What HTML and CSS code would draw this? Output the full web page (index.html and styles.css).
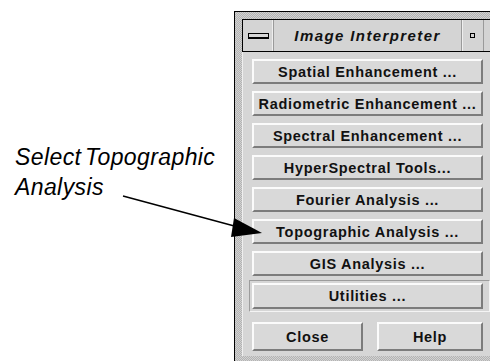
FILE: index.html
```html
<!DOCTYPE html>
<html>

<head>
    <link rel="stylesheet" href="styles.css">
</head>

<body>
    <div class="stage">
        <div class="callout">Select Topographic<br>Analysis</div>
        <svg class="arrow" width="490" height="361" viewBox="0 0 490 361">
            <line x1="123" y1="196" x2="238" y2="227" stroke="#000" stroke-width="1.5" />
            <polygon points="234,218 231,237 262,233" fill="#000" />
        </svg>

        <div class="window">
            <div class="titlebar">
                <div class="menu-btn"><span class="bar"></span></div>
                <div class="title">Image Interpreter</div>
                <div class="min-btn"><span class="dot"></span></div>
                <div class="max-btn"></div>
            </div>
            <div class="panel">
                <button class="btn">Spatial Enhancement ...</button>
                <button class="btn">Radiometric Enhancement ...</button>
                <button class="btn">Spectral Enhancement ...</button>
                <button class="btn">HyperSpectral Tools...</button>
                <button class="btn">Fourier Analysis ...</button>
                <button class="btn">Topographic Analysis ...</button>
                <button class="btn">GIS Analysis ...</button>
                <div class="default-frame">
                    <button class="btn">Utilities ...</button>
                </div>
                <div class="bottom-row">
                    <button class="btn big">Close</button>
                    <button class="btn big">Help</button>
                </div>
            </div>
        </div>
    </div>
</body>

</html>
```

FILE: styles.css
```css
body {
    margin: 0;
    background: #fff;
    width: 490px;
    height: 361px;
    overflow: hidden;
}

.stage {
    position: relative;
    height: 350px;
    padding: 11px 0 0 234px;
}

.callout {
    position: absolute;
    left: 15px;
    top: 142px;
    font-family: "Liberation Sans", Arial, sans-serif;
    font-style: italic;
    font-size: 23px;
    line-height: 30px;
    letter-spacing: 0.4px;
    word-spacing: -3px;
    color: #000;
}

.arrow {
    position: absolute;
    left: 0;
    top: 0;
    z-index: 2;
}

.window {
    box-sizing: border-box;
    width: 270px;
    height: 350px;
    border: 1px solid #000;
    border-right: none;
    border-bottom: none;
    padding: 7px 0 0 7px;
    background-color: #b3b3b3;
    background-image:
        linear-gradient(45deg, #d2d2d2 25%, transparent 25%, transparent 75%, #d2d2d2 75%),
        linear-gradient(45deg, #d2d2d2 25%, transparent 25%, transparent 75%, #d2d2d2 75%);
    background-size: 2px 2px;
    background-position: 0 0, 1px 1px;
}

.titlebar {
    display: flex;
    height: 31px;
    border: 1px solid #000;
    border-right: none;
    background: #d4d4d4;
}

.menu-btn {
    width: 30px;
    border-right: 1px solid #9a9a9a;
    box-shadow: inset -1px 0 0 #eee;
    display: flex;
    align-items: center;
    justify-content: center;
}

.bar {
    display: block;
    width: 19px;
    height: 3px;
    border: 1px solid #000;
    border-bottom-width: 2px;
    background: #d4d4d4;
}

.title {
    flex: 1;
    text-align: center;
    font-family: "Liberation Sans", Arial, sans-serif;
    font-style: italic;
    font-weight: bold;
    font-size: 15px;
    letter-spacing: 1.4px;
    line-height: 31px;
    color: #111;
    border-right: 1px solid #9a9a9a;
}

.min-btn {
    width: 21px;
    display: flex;
    align-items: center;
    justify-content: center;
    border-right: 1px solid #9a9a9a;
    box-shadow: inset 1px 0 0 #eee;
}

.dot {
    display: block;
    width: 3px;
    height: 3px;
    border: 1px solid #000;
    background: #d4d4d4;
}

.max-btn {
    width: 20px;
}

.panel {
    display: flex;
    flex-direction: column;
    gap: 7px;
    width: 240px;
    height: 297px;
    padding: 7px 0 0 9px;
    background: #d6d6d6;
    border-left: 1px solid #efefef;
}

.btn {
    width: 231px;
    height: 25px;
    padding: 0;
    background: #d9d9d9;
    border: 2px solid;
    border-color: #fbfbfb #7c7c7c #7c7c7c #fbfbfb;
    font-family: "Liberation Sans", Arial, sans-serif;
    font-weight: bold;
    font-size: 14.5px;
    letter-spacing: 0.7px;
    color: #111;
    text-align: center;
}

.default-frame {
    width: 235px;
    margin-left: -3px;
    padding: 2px;
    border: 1px solid;
    border-color: #9c9c9c #f4f4f4 #f4f4f4 #9c9c9c;
    margin-top: -3px;
}

.default-frame .btn {
    width: 231px;
    height: 26px;
}

.bottom-row {
    display: flex;
    gap: 14px;
    margin-top: 3px;
}

.btn.big {
    height: 29px;
}

.bottom-row .btn:first-child {
    width: 111px;
}

.bottom-row .btn:last-child {
    width: 106px;
}
```
